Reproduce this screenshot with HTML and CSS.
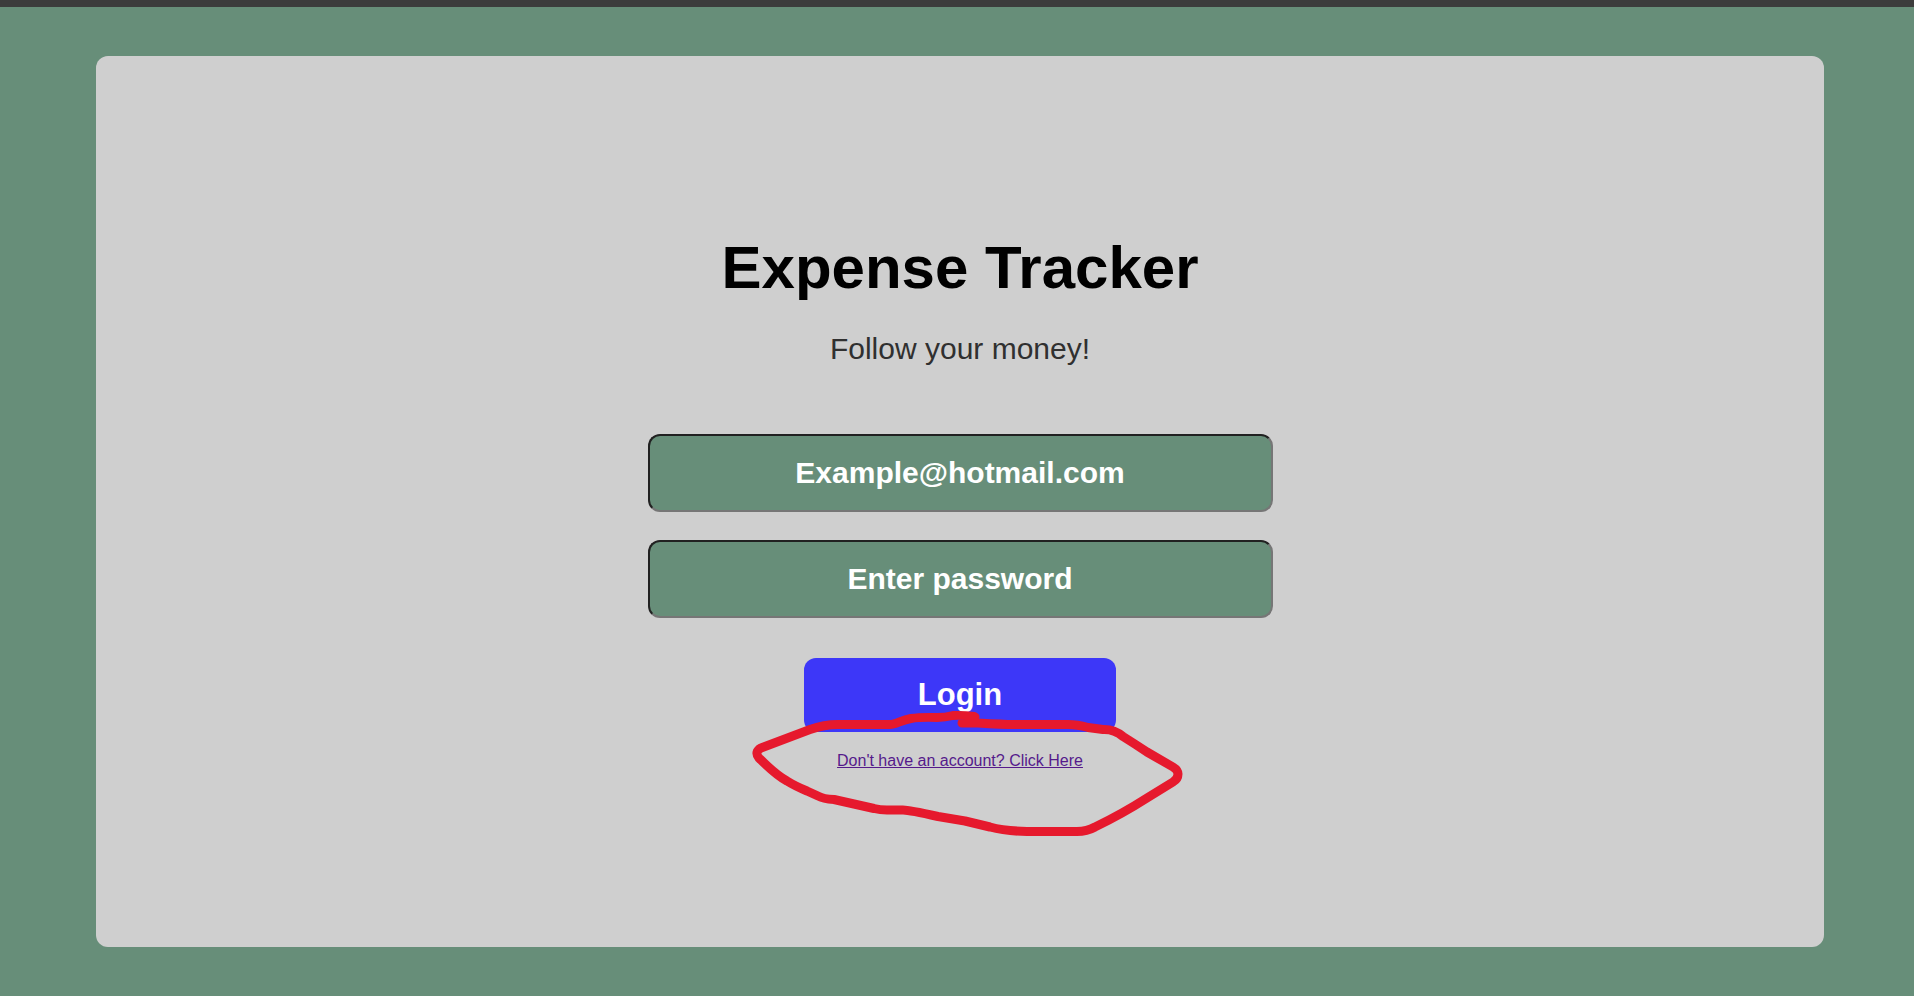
FILE: index.html
```html
<!DOCTYPE html>
<html lang="en">
<head>
<meta charset="utf-8">
<title>Expense Tracker</title>
<link rel="stylesheet" href="styles.css">
</head>
<body>
<main class="page">
  <section class="card">
    <h1 class="title">Expense Tracker</h1>
    <p class="tagline">Follow your money!</p>
    <form class="form">
      <input class="field" type="email" placeholder="Example@hotmail.com" aria-label="Email">
      <input class="field" type="password" placeholder="Enter password" aria-label="Password">
      <div class="actions">
        <button class="login" type="submit">Login</button>
        <a class="signup" href="#signup">Don't have an account? Click Here</a>
        <svg class="marker" viewBox="730 700 460 140" aria-hidden="true">
          <path d="M974 716.500 Q963 715 953 715.500 Q945 717.500 937 717.500 Q920 717 911 718.500 C901 720 896 724.500 890 724.500 L838 724.500 Q824 724.500 810 729.500 Q790 737 761 748 Q754 752 759 758 Q776 775 787 781 Q795 786 807 791 L818 796 Q823 799 834 799.500 L874 808.500 Q880 810 887 810 L903 810 Q909 810 938 816.500 L965 821 L990 827 Q1005 831 1027 831.500 L1075 831.500 Q1086 832 1095 827 Q1122 814 1147 798 L1173 782 Q1178 779 1178 774 Q1178 770 1173 767 L1147 752 Q1135 744 1123 736.500 Q1114 729 1103 729.500 L1088 727.500 Q1077 724.500 1068 724.500 L1015 724.500 Q1002 724.500 978 723 L962 723 L975 717"/>
        </svg>
      </div>
    </form>
  </section>
</main>
</body>
</html>
```
FILE: styles.css
```css
* {
  box-sizing: border-box;
}

body {
  margin: 0;
  background: #678e79;
  font-family: "Liberation Sans", Arial, sans-serif;
}

.page {
  display: flex;
  min-height: 100vh;
  padding: 49px 90px 49px 96px;
  border-top: 7px solid #3c3c3c;
}

.card {
  display: flex;
  flex: 1;
  flex-direction: column;
  align-items: center;
  justify-content: center;
  border-radius: 12px;
  background: #cfcfcf;
}

.title {
  margin: 0 0 30px;
  font-size: 60px;
  color: #000;
}

.tagline {
  margin: 0 0 68px;
  font-size: 30px;
  color: #303030;
}

.form {
  display: flex;
  flex-direction: column;
  align-items: center;
  gap: 28px;
  width: 100%;
}

.field {
  width: 625px;
  max-width: 90%;
  padding: 20px;
  border: 2px inset #767676;
  border-radius: 12px;
  background: #678e79;
  color: #fff;
  font-family: inherit;
  font-size: 30px;
  font-weight: bold;
  text-align: center;
}

.field::placeholder {
  color: #fff;
}

.actions {
  position: relative;
  display: flex;
  flex-direction: column;
  align-items: center;
  gap: 20px;
  margin-top: 12px;
}

.login {
  width: 312px;
  padding: 20px;
  border: 0;
  border-radius: 12px;
  background: #3d37f8;
  color: #fff;
  font-family: inherit;
  font-size: 31px;
  font-weight: bold;
  line-height: 34px;
}

.signup {
  color: #551a8b;
  font-size: 16px;
}

.marker {
  position: absolute;
  top: 42px;
  left: 50%;
  width: 460px;
  margin-left: -230px;
  pointer-events: none;
  fill: none;
  stroke: #e6192d;
  stroke-width: 9;
  stroke-linecap: round;
  stroke-linejoin: round;
}
```
